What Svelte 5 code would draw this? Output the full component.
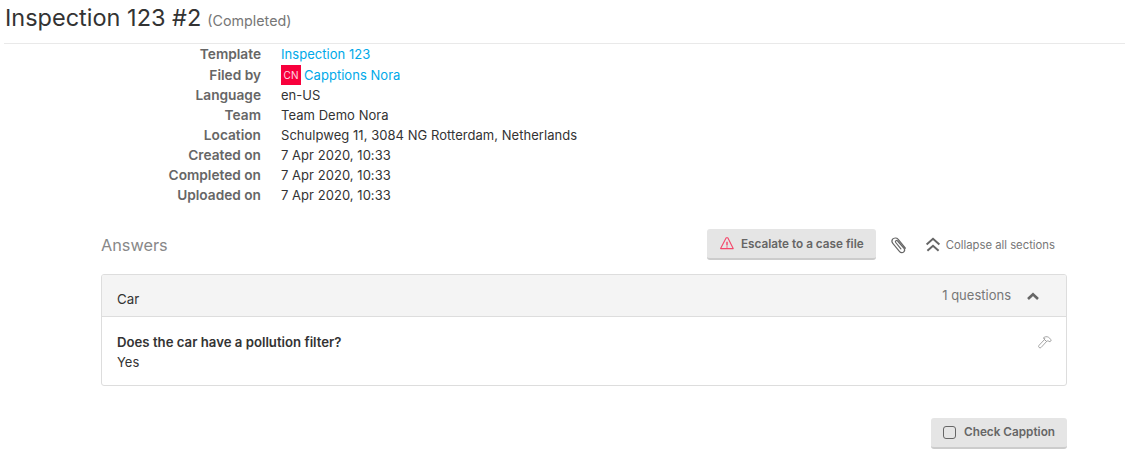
<script>
  const details = [
    { label: 'Language', value: 'en-US' },
    { label: 'Team', value: 'Team Demo Nora' },
    { label: 'Location', value: 'Schulpweg 11, 3084 NG Rotterdam, Netherlands' },
    { label: 'Created on', value: '7 Apr 2020, 10:33' },
    { label: 'Completed on', value: '7 Apr 2020, 10:33' },
    { label: 'Uploaded on', value: '7 Apr 2020, 10:33' }
  ];
</script>

<div class="page">
  <header class="title-bar">
    <h1>Inspection 123 #2</h1>
    <span class="status">(Completed)</span>
  </header>

  <dl class="details">
    <dt>Template</dt>
    <dd><a href="#template">Inspection 123</a></dd>
    <dt>Filed by</dt>
    <dd class="filed-by">
      <span class="avatar">CN</span>
      <a href="#user">Capptions Nora</a>
    </dd>
    {#each details as row}
      <dt>{row.label}</dt>
      <dd>{row.value}</dd>
    {/each}
  </dl>

  <section class="answers">
    <div class="answers-head">
      <h2>Answers</h2>
      <div class="actions">
        <button class="btn">
          <svg width="16" height="16" viewBox="0 0 16 16" fill="none" stroke="#f4486c" stroke-width="1.1" stroke-linejoin="round">
            <path d="M7.2 1.8 1.6 12.6h12.6L8.8 1.8z"></path>
            <path d="M8 5.8v3.6" stroke-width="1.5"></path>
            <path d="M8 10.4v1" stroke-width="1.5"></path>
          </svg>
          Escalate to a case file
        </button>
        <svg class="clip" width="18" height="18" viewBox="0 0 18 18" fill="none" stroke="#666" stroke-width="1.2" stroke-linecap="round">
          <path d="M15.4 12.2 8 3.2C6.6 1.4 3.8 1.8 2.6 3.2 1.6 4.6 1.8 6.2 2.8 7.4l6.8 8.2c1.2 1.4 3.2 1.2 4.2.2 1-1 1-2.4.2-3.4L7.6 5a1.2 1.2 0 0 0-1.9 1.5l5.2 6.4"></path>
        </svg>
        <span class="collapse">
          <svg width="16" height="16" viewBox="0 0 16 16" fill="none" stroke="#666" stroke-width="2">
            <path d="M1.6 7.4 8 1.8l6.4 5.6"></path>
            <path d="M2.4 13.8 8 8.8l5.6 5"></path>
          </svg>
          Collapse all sections
        </span>
      </div>
    </div>

    <div class="card">
      <div class="card-head">
        <span class="card-title">Car</span>
        <span class="count">1 questions</span>
        <svg class="chevron" width="14" height="10" viewBox="0 0 14 10" fill="none" stroke="#666" stroke-width="2.6">
          <path d="M2 8 7 3.2 12 8"></path>
        </svg>
      </div>
      <div class="card-body">
        <div>
          <div class="question">Does the car have a pollution filter?</div>
          <div class="answer">Yes</div>
        </div>
        <svg class="hammer" width="14" height="14" viewBox="0 0 16 16" fill="none" stroke="#999" stroke-width="1" stroke-linejoin="round">
          <path d="M1.2 11.8 7.4 5.2l2.4 2.2-6.2 6.8a1.6 1.6 0 0 1-2.4-2.4z"></path>
          <path d="M6 3.6C7.6 1.8 10.2 1.4 12 2.6l3.2 3-1.4 2.2-2.6-1.2-1.4.8-2.4-2.2.4-1.4z"></path>
        </svg>
      </div>
    </div>

    <div class="footer">
      <button class="btn">
        <span class="checkbox"></span>
        Check Capption
      </button>
    </div>
  </section>
</div>

<style>
  :global(body) {
    font-family: Inter, "Noto Sans", sans-serif;
    color: #333;
    background: #fff;
  }

  .page {
    padding-left: 4px;
  }

  .title-bar {
    display: flex;
    align-items: baseline;
    gap: 6px;
    height: 44px;
    padding-top: 3px;
    box-sizing: border-box;
    border-bottom: 1px solid #e9e9e9;
  }

  h1 {
    margin: 0 0 0 1px;
    font-size: 23.5px;
    font-weight: 400;
    line-height: 29px;
    color: #333;
  }

  .status {
    font-size: 14.3px;
    color: #777;
  }

  .details {
    display: grid;
    grid-template-columns: 257px 1fr;
    column-gap: 20px;
    grid-auto-rows: 20.05px;
    align-items: center;
    margin: 0;
    padding-top: 0.47px;
    font-size: 13px;
    line-height: 20px;
  }

  dt {
    text-align: right;
    font-size: 13.7px;
    font-weight: 600;
    color: #666;
  }

  dd {
    margin: 0;
    color: #333;
    letter-spacing: 0.04px;
  }

  a {
    color: #00a9e9;
    text-decoration: none;
  }

  .filed-by {
    display: flex;
    align-items: center;
    gap: 3px;
  }

  .avatar {
    display: flex;
    align-items: center;
    justify-content: center;
    width: 20px;
    height: 20px;
    background: #f8003c;
    color: #ffd9e2;
    font-size: 10px;
  }

  .answers {
    margin: 24px 0 0 97px;
    width: 966px;
  }

  .answers-head {
    display: flex;
    align-items: center;
    justify-content: space-between;
    height: 32px;
    margin-bottom: 13px;
  }

  h2 {
    margin: 0;
    font-size: 16.3px;
    font-weight: 400;
    color: #888;
  }

  .actions {
    display: flex;
    align-items: center;
    padding-right: 12px;
  }

  .btn {
    display: flex;
    align-items: center;
    height: 31px;
    padding: 0 12px;
    border: 0;
    border-bottom: 2px solid #ccc;
    border-radius: 3px;
    background: #e5e5e5;
    color: #666;
    font-family: inherit;
    font-size: 11.75px;
    font-weight: 600;
    gap: 6px;
  }

  .clip {
    margin-left: 14px;
  }

  .collapse {
    display: flex;
    align-items: center;
    gap: 5px;
    margin-left: 17px;
    font-size: 11.3px;
    color: #777;
  }

  .card {
    border: 1px solid #ddd;
    border-radius: 3px;
    overflow: hidden;
  }

  .card-head {
    display: flex;
    align-items: center;
    height: 41px;
    padding: 0 26px 0 15px;
    background: #f4f4f4;
    border-bottom: 1px solid #ddd;
    font-size: 13px;
  }

  .card-title {
    flex: 1;
    padding-top: 7px;
    font-size: 13.3px;
    color: #333;
  }

  .count {
    color: #777;
  }

  .chevron {
    margin-left: 15px;
    margin-top: 1px;
  }

  .card-body {
    display: flex;
    justify-content: space-between;
    height: 68px;
    padding: 15px 14px 0 15px;
    box-sizing: border-box;
    font-size: 13px;
    line-height: 20px;
  }

  .question {
    font-size: 13.2px;
    font-weight: 600;
    color: #333;
  }

  .answer {
    color: #333;
  }

  .hammer {
    margin-top: 3px;
  }

  .footer {
    display: flex;
    justify-content: flex-end;
    margin-top: 32px;
  }

  .checkbox {
    width: 11px;
    height: 11px;
    border: 1px solid #666;
    border-radius: 3px;
    margin-right: 2px;
  }
</style>
